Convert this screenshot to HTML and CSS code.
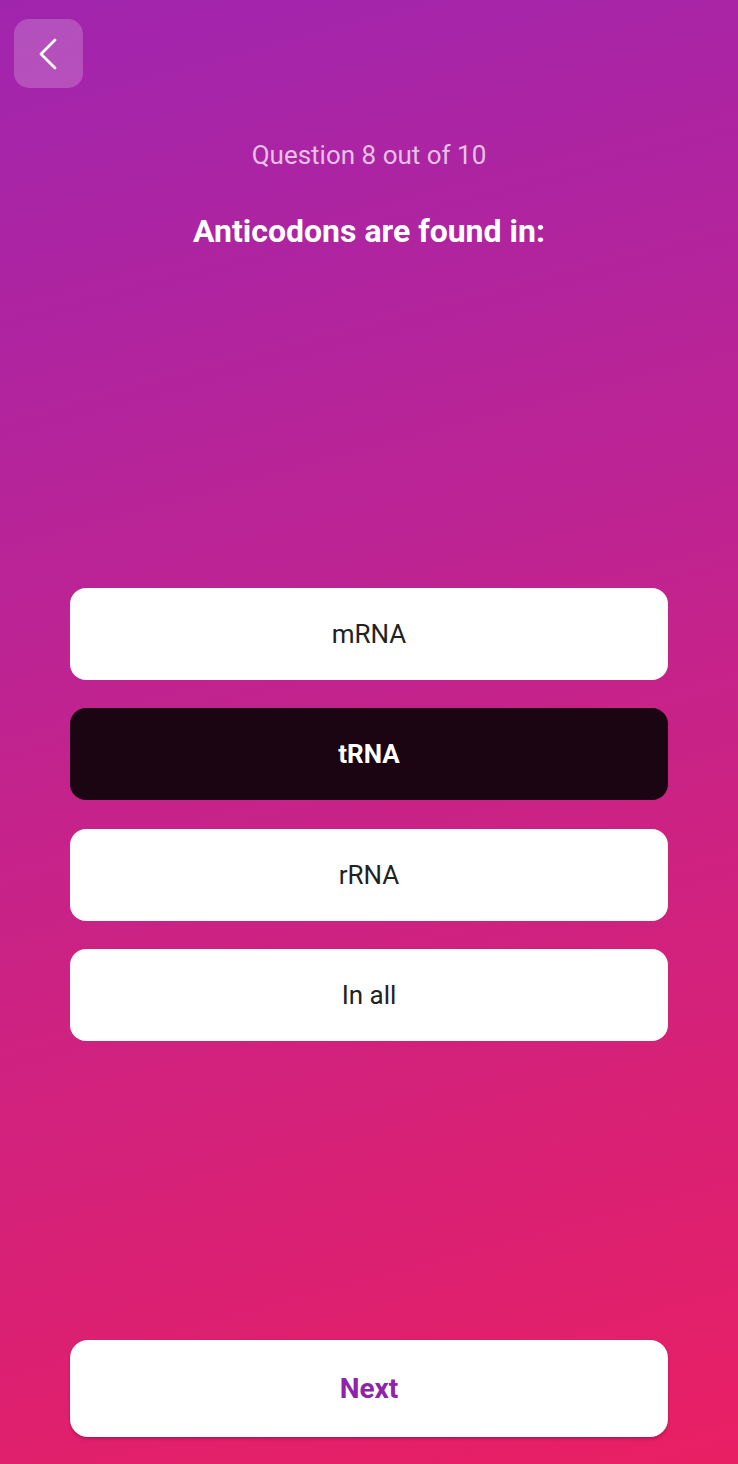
FILE: index.html
```html
<!DOCTYPE html>
<html lang="en">
<head>
<meta charset="utf-8">
<title>Quiz</title>
<link rel="stylesheet" href="styles.css">
</head>
<body>
<main class="screen">
  <button class="back" aria-label="Back">
    <svg width="69" height="69" viewBox="0 0 69 69"><path d="M41 21 L27 35 L41 49" fill="none" stroke="#fff" stroke-width="2.8" stroke-linecap="round" stroke-linejoin="round"/></svg>
  </button>
  <p class="counter">Question 8 out of 10</p>
  <h1 class="question">Anticodons are found in:</h1>
  <div class="options">
    <button class="option">mRNA</button>
    <button class="option selected">tRNA</button>
    <button class="option">rRNA</button>
    <button class="option">In all</button>
  </div>
  <button class="next">Next</button>
</main>
</body>
</html>
```
FILE: styles.css
```css
* { box-sizing: border-box; }
html, body { margin: 0; padding: 0; }
body {
  font-family: Roboto, "Noto Sans", sans-serif;
  width: 738px;
  height: 1464px;
  overflow: hidden;
}
.screen {
  height: 1464px;
  display: flex;
  flex-direction: column;
  padding: 19px 0 27px;
  background: linear-gradient(165deg, #a025ae 0%, #c1238f 45%, #e91f63 100%);
}
.back {
  margin-left: 14px;
  width: 69px;
  height: 69px;
  padding: 0;
  border: none;
  border-radius: 15px;
  background: rgba(255, 255, 255, 0.2);
  display: flex;
}
.counter {
  margin: 52px 0 0;
  text-align: center;
  font-size: 26px;
  line-height: 30px;
  color: rgba(255, 255, 255, 0.72);
}
.question {
  margin: 42px 0 0;
  text-align: center;
  font-size: 32px;
  line-height: 38px;
  font-weight: 700;
  color: #fff;
}
.options {
  margin: 338px 70px 0;
  display: flex;
  flex-direction: column;
  gap: 28.3px;
}
.option {
  height: 92px;
  border: none;
  border-radius: 16px;
  background: #fff;
  font-family: inherit;
  font-size: 26px;
  color: #222;
}
.option.selected {
  background: #1b0513;
  color: #fff;
  font-weight: 700;
}
.next {
  margin: auto 70px 0;
  height: 97px;
  border: none;
  border-radius: 18px;
  background: #fff;
  font-family: inherit;
  font-size: 28px;
  font-weight: 700;
  color: #8e24aa;
  box-shadow: 0 2px 3px rgba(80, 0, 40, 0.3);
}
```
